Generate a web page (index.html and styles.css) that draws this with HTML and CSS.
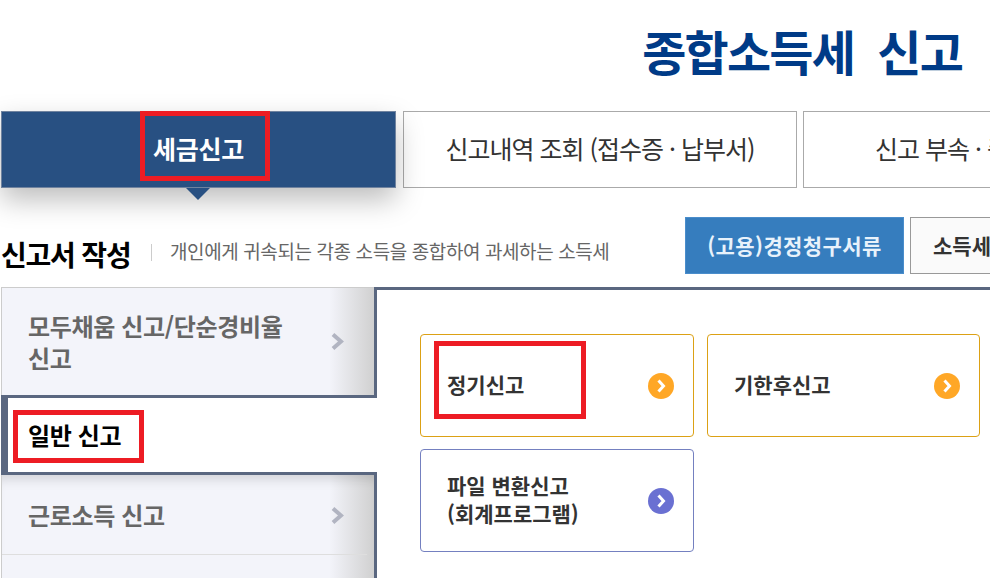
FILE: index.html
```html
<!DOCTYPE html>
<html lang="ko">
<head>
    <meta charset="UTF-8">
    <title>종합소득세 신고</title>
    <link rel="stylesheet" href="styles.css">
</head>
<body>
    <div id="page">
        <h1 class="page-title">종합소득세&nbsp; 신고</h1>

        <!-- 상단 탭 -->
        <div class="tabs">
            <div class="tab tab-on"><span class="mark-wrap">세금신고<i class="mark mark-tab"></i></span></div>
            <div class="tab">신고내역 조회 (접수증 · 납부서)</div>
            <div class="tab">신고 부속 · 증빙서류 제출</div>
        </div>

        <!-- 신고서 작성 -->
        <div class="section-head">
            <h2 class="section-title">신고서 작성</h2>
            <p class="section-desc">개인에게 귀속되는 각종 소득을 종합하여 과세하는 소득세</p>
            <div class="head-btns">
                <div class="head-btn head-btn-blue">(고용)경정청구서류</div>
                <div class="head-btn">소득세 신고서류</div>
            </div>
        </div>

        <div class="content">
            <ul class="side-menu">
                <li class="side-item side-item-tall">
                    <span>모두채움 신고/단순경비율<br>신고</span>
                    <svg class="side-arrow" viewBox="0 0 13 17"><path d="M2 1.5 L10 8.5 L2 15.5" fill="none" stroke="#b1b4c1" stroke-width="4"/></svg>
                </li>
                <li class="side-item side-item-on"><span class="mark-wrap">일반 신고<i class="mark mark-side"></i></span></li>
                <li class="side-item side-item-line">
                    <span>근로소득 신고</span>
                    <svg class="side-arrow" viewBox="0 0 13 17"><path d="M2 1.5 L10 8.5 L2 15.5" fill="none" stroke="#b1b4c1" stroke-width="4"/></svg>
                </li>
                <li class="side-item"></li>
            </ul>

            <div class="panel">
                <div class="card-grid">
                    <div class="card card-orange">
                        <span class="card-text mark-wrap">정기신고<i class="mark mark-card"></i></span>
                        <svg class="card-arrow" viewBox="0 0 26 26"><circle cx="13" cy="13" r="13" fill="#ffa726"/><path d="M10.5 7.5 L15.5 13 L10.5 18.5" fill="none" stroke="#fff" stroke-width="3"/></svg>
                    </div>
                    <div class="card card-orange">
                        <span class="card-text">기한후신고</span>
                        <svg class="card-arrow" viewBox="0 0 26 26"><circle cx="13" cy="13" r="13" fill="#ffa726"/><path d="M10.5 7.5 L15.5 13 L10.5 18.5" fill="none" stroke="#fff" stroke-width="3"/></svg>
                    </div>
                    <div class="card card-blue">
                        <span class="card-text">파일 변환신고<br>(회계프로그램)</span>
                        <svg class="card-arrow" viewBox="0 0 26 26"><circle cx="13" cy="13" r="13" fill="#6a70d2"/><path d="M10.5 7.5 L15.5 13 L10.5 18.5" fill="none" stroke="#fff" stroke-width="3"/></svg>
                    </div>
                </div>
            </div>
        </div>
    </div>
</body>
</html>
```

FILE: styles.css
```css
/* 전체 */
html, body {
    margin: 0;
    height: 578px;
    overflow: hidden;
    background-color: #fff;
}

body {
    font-family: 'Noto Sans CJK KR', 'Noto Sans', sans-serif;
    color: #333;
}

#page {
    width: 1400px;
    padding-left: 1px;
}

ul {
    margin: 0;
    padding: 0;
    list-style: none;
}

/* 제목 */
.page-title {
    width: 961px;
    height: 111px;
    margin: 0;
    padding-top: 15px;
    box-sizing: border-box;
    font-size: 48px;
    line-height: 70px;
    font-weight: 700;
    letter-spacing: -1.8px;
    text-align: right;
    color: #003b87;
}

/* 탭 */
.tabs {
    display: flex;
    gap: 6px;
}

.tab {
    flex: none;
    width: 394px;
    height: 77px;
    box-sizing: border-box;
    border: 1px solid #aaa;
    font-size: 25px;
    line-height: 72px;
    letter-spacing: -1px;
    text-align: center;
    white-space: nowrap;
}

.tab-on {
    position: relative;
    width: 395px;
    margin-right: 1px;
    border-color: #70839f;
    background-color: #285082;
    box-shadow: 0 12px 28px rgba(0,0,0,0.26);
    font-weight: 700;
    letter-spacing: -0.3px;
    color: #fff;
}

.tab-on::after {
    content: '';
    position: absolute;
    left: 184px;
    top: 76px;
    border-style: solid;
    border-width: 12px 12px 0;
    border-color: #285082 transparent transparent;
}

/* 빨간 표시 박스 */
.mark-wrap {
    position: relative;
}

.mark {
    position: absolute;
    border: 5px solid #ed1c24;
}

.mark-tab {
    left: -13px;
    top: -19px;
    width: 120px;
    height: 60px;
}

.mark-side {
    left: -15px;
    top: -9px;
    width: 121px;
    height: 43px;
}

.mark-card {
    left: -13px;
    top: -29px;
    width: 142px;
    height: 68px;
}

/* 신고서 작성 */
.section-head {
    display: flex;
    align-items: flex-start;
    height: 99px;
    padding-top: 29px;
    box-sizing: border-box;
}

.section-title {
    flex: none;
    margin: 0;
    width: 150px;
    padding-top: 16px;
    box-sizing: border-box;
    font-size: 28px;
    line-height: 42px;
    font-weight: 700;
    letter-spacing: -1.2px;
    white-space: nowrap;
    color: #000;
}

.section-desc {
    flex: none;
    width: 534px;
    margin: 0;
    padding: 20px 0 0 19px;
    box-sizing: border-box;
    font-size: 19px;
    line-height: 28px;
    letter-spacing: -0.4px;
    color: #666;
    position: relative;
    white-space: nowrap;
}

.section-desc::before {
    content: '';
    position: absolute;
    left: 0;
    top: 27px;
    width: 1px;
    height: 17px;
    background-color: #ccc;
}

.head-btns {
    display: flex;
    gap: 6px;
}

.head-btn {
    width: 240px;
    height: 57px;
    box-sizing: border-box;
    border: 1px solid #999;
    background-color: #fafafa;
    padding-left: 22px;
    font-size: 21px;
    font-weight: 700;
    line-height: 55px;
    white-space: nowrap;
}

.head-btn-blue {
    width: 219px;
    padding-left: 0;
    border-color: #4a8dcb;
    background-color: #367dbe;
    color: #e8f2fb;
    text-align: center;
    letter-spacing: 0.4px;
}

/* 본문 */
.content {
    display: flex;
}

.side-menu {
    flex: none;
    width: 373px;
}

.side-item {
    display: flex;
    align-items: center;
    justify-content: space-between;
    height: 80px;
    box-sizing: border-box;
    padding: 0 30px 0 26px;
    border-left: 1px solid #ccc;
    background: linear-gradient(to right, #f3f4fa 88%, #d0d0d0 100%);
    font-size: 24px;
    font-weight: 700;
    line-height: 32px;
    letter-spacing: -0.35px;
    color: #666;
}

.side-item-tall {
    height: 108px;
    border-top: 1px solid #ccc;
}

.side-item-line {
    position: relative;
    box-shadow: inset 0 12px 12px -8px rgba(0,0,0,0.14);
}

.side-item-line::after {
    content: '';
    position: absolute;
    left: 0;
    right: 7px;
    bottom: 0;
    height: 1px;
    background-color: #dedede;
}

.side-item-on {
    position: relative;
    z-index: 1;
    width: 376px;
    border: solid #5a6780;
    border-width: 3px 0 3px 7px;
    padding-left: 20px;
    background: #fff;
    color: #000;
}

.side-arrow {
    flex: none;
    width: 13px;
    height: 17px;
}

.panel {
    flex: none;
    width: 1000px;
    height: 300px;
    box-sizing: border-box;
    border: solid #5a6780;
    border-width: 3px 0 0 3px;
    padding: 44px 0 0 43px;
}

/* 카드 */
.card-grid {
    display: grid;
    grid-template-columns: 274px 273px;
    grid-auto-rows: 103px;
    gap: 12px 13px;
}

.card {
    display: flex;
    align-items: center;
    justify-content: space-between;
    box-sizing: border-box;
    padding: 0 19px 0 26px;
    border: 1px solid;
    border-radius: 4px;
    font-size: 21px;
    font-weight: 700;
    line-height: 28px;
}

.card-text {
    margin-bottom: 4px;
}

.card-orange {
    border-color: #dca115;
}

.card-blue {
    border-color: #7480c0;
}

.card-arrow {
    flex: none;
    width: 26px;
    height: 26px;
}
```
